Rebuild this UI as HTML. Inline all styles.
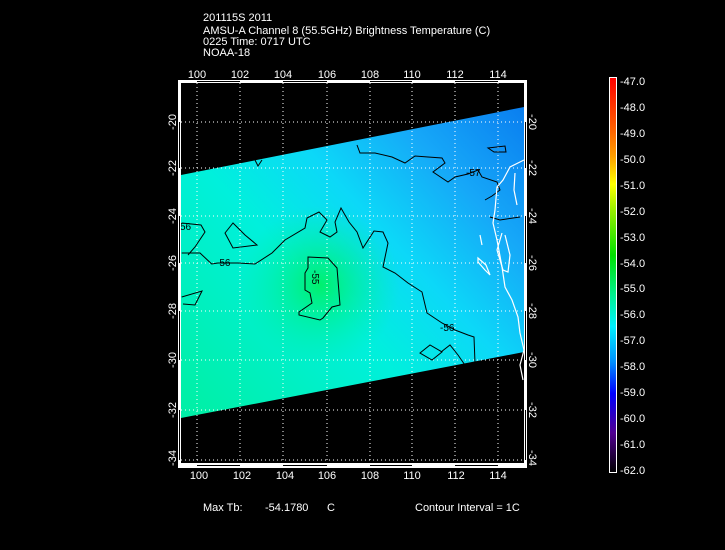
<!DOCTYPE html>
<html><head><meta charset="utf-8"><style>
html,body{margin:0;padding:0;background:#000;}
svg{display:block}
text{font-family:"Liberation Sans",sans-serif;fill:#fff;font-size:11px}
text.k{fill:#000;font-size:10px}
</style></head><body>
<svg width="725" height="550" viewBox="0 0 725 550" xmlns="http://www.w3.org/2000/svg">
<defs>
<linearGradient id="sw" x1="524" y1="110" x2="200" y2="410" gradientUnits="userSpaceOnUse">
<stop offset="0" stop-color="#0a7ff0"/>
<stop offset="0.22" stop-color="#16a8f8"/>
<stop offset="0.42" stop-color="#0cd8f8"/>
<stop offset="0.62" stop-color="#00f0dc"/>
<stop offset="1" stop-color="#00f0a8"/>
</linearGradient>
<radialGradient id="hot" cx="320" cy="285" r="80" gradientUnits="userSpaceOnUse">
<stop offset="0" stop-color="#00f060" stop-opacity="0.9"/>
<stop offset="1" stop-color="#00f0a0" stop-opacity="0"/>
</radialGradient>
<linearGradient id="cb" x1="0" y1="0" x2="0" y2="1">
<stop offset="0" stop-color="#ff0000"/>
<stop offset="0.13" stop-color="#ff6000"/>
<stop offset="0.2" stop-color="#ffa000"/>
<stop offset="0.27" stop-color="#ffff00"/>
<stop offset="0.33" stop-color="#a0f000"/>
<stop offset="0.45" stop-color="#00e000"/>
<stop offset="0.55" stop-color="#00f090"/>
<stop offset="0.63" stop-color="#00f0ff"/>
<stop offset="0.72" stop-color="#0090ff"/>
<stop offset="0.8" stop-color="#0000ff"/>
<stop offset="0.9" stop-color="#500090"/>
<stop offset="1" stop-color="#000000"/>
</linearGradient>
</defs>
<text x="203" y="21">201115S 2011</text>
<text x="203" y="34">AMSU-A Channel 8 (55.5GHz) Brightness Temperature (C)</text>
<text x="203" y="45">0225 Time: 0717 UTC</text>
<text x="203" y="56">NOAA-18</text>
<g text-anchor="middle">
<text x="197" y="78">100</text><text x="240" y="78">102</text><text x="283" y="78">104</text><text x="327" y="78">106</text><text x="370" y="78">108</text><text x="412" y="78">110</text><text x="455" y="78">112</text><text x="498" y="78">114</text>
<text x="199" y="479">100</text><text x="242" y="479">102</text><text x="285" y="479">104</text><text x="327" y="479">106</text><text x="370" y="479">108</text><text x="412" y="479">110</text><text x="456" y="479">112</text><text x="498" y="479">114</text>
</g>
<polygon points="181,175 524,107 524,352 181,418" fill="url(#sw)"/>
<polygon points="181,175 524,107 524,352 181,418" fill="url(#hot)"/>
<g stroke="#fff" stroke-width="1" stroke-dasharray="1,3" fill="none">
<path d="M197 83V463M240 83V463M283 83V463M327 83V463M370 83V463M412 83V463M455 83V463M498 83V463"/>
<path d="M181 122H524M181 168H524M181 216H524M181 263H524M181 311H524M181 360H524M181 410H524M181 460H524"/>
</g>
<g stroke="#000" stroke-width="1" fill="none">
<path d="M181.7 253 L200 253 L211.7 264 L218 263 L238 263 L255 264 L272 253 L285 240 L305 228 L307 218 L319 212 L327 220 L320 232 L330 237 L337 232 L335 222 L341 208 L349 222 L357 232 L363 248 L374 231 L383 232 L388 243 L383 267 L395 273 L408 283 L422 292 L427 313 L442 323 L455 330 L468 335 L474 337 L475 363"/>
<path d="M308 257 L328 258 L337 268 L340 305 L332 307 L323 318 L320 320 L299 315 L299 312 L312 303 L310 293 L305 290 L305 273 L308 268 Z"/>
<path d="M357 145 L360 153 L375 153 L392 157 L405 163 L415 156 L428 157 L442 158 L445 163 L433 172 L448 182 L455 177 L468 174 L478 170 L482 177 L497 182 L500 190 L492 196 L485 200"/>
<path d="M488 148 L505 146 L506 152 L494 152 Z"/>
<path d="M255 160 L258 166 L262 160"/>
<path d="M181.7 223 L201 225 L205 232 L195 247 L188 255"/>
<path d="M225 233 L233 223 L245 235 L257 245 L233 248 Z"/>
<path d="M181.7 297 L202 291 L195 305 L183 304"/>
<path d="M420 353 L430 345 L442 352 L432 360 Z"/>
<path d="M441 352 L450 345 L458 355 L467 368 L472 363"/>
<path d="M490 217 L500 220 L520 217"/>
</g>
<text class="k" x="180" y="230">56</text>
<text class="k" x="216" y="266">-56</text>
<text class="k" x="466" y="176">-57</text>
<text class="k" x="440" y="331">-56</text>
<text class="k" x="300" y="268" transform="rotate(90 305 275)">-55</text>
<g stroke="#fff" stroke-width="1.2" fill="none">
<path d="M524 160 L510 167 L503 180 L497 187 L495 210 L493 223 L497 240 L502 267 L505 287 L512 300 L518 317 L520 333 L524 350 L520 365 L523 380"/>
<path d="M502 233 L497 250 L503 270 L508 272 L510 255 L505 235"/>
<path d="M478 258 L486 265 L490 275 L485 270 L478 262 Z"/>
<path d="M515 173 L514 190 L517 205"/>
<path d="M480 235 L482 245"/>
</g>
<g fill="#fff">
<rect x="178" y="80" width="349" height="3"/>
<rect x="178" y="463" width="349" height="5"/>
<rect x="178" y="80" width="3" height="388"/>
<rect x="524" y="80" width="3" height="388"/>
</g>
<g fill="#000">
<rect x="197" y="81" width="43" height="1"/><rect x="283" y="81" width="44" height="1"/><rect x="370" y="81" width="42" height="1"/><rect x="455" y="81" width="43" height="1"/>
<rect x="197" y="465" width="43" height="1"/><rect x="283" y="465" width="44" height="1"/><rect x="370" y="465" width="42" height="1"/><rect x="455" y="465" width="43" height="1"/>
<rect x="179" y="122" width="1" height="46"/><rect x="179" y="216" width="1" height="47"/><rect x="179" y="311" width="1" height="49"/><rect x="179" y="410" width="1" height="50"/>
<rect x="525" y="122" width="1" height="46"/><rect x="525" y="216" width="1" height="47"/><rect x="525" y="311" width="1" height="49"/><rect x="525" y="410" width="1" height="50"/>
</g>
<g text-anchor="middle">
<text transform="translate(176 122) rotate(-90)">-20</text>
<text transform="translate(176 168) rotate(-90)">-22</text>
<text transform="translate(176 216) rotate(-90)">-24</text>
<text transform="translate(176 263) rotate(-90)">-26</text>
<text transform="translate(176 311) rotate(-90)">-28</text>
<text transform="translate(176 360) rotate(-90)">-30</text>
<text transform="translate(176 410) rotate(-90)">-32</text>
<text transform="translate(176 458) rotate(-90)">-34</text>
<text transform="translate(529 122) rotate(90)">-20</text>
<text transform="translate(529 168) rotate(90)">-22</text>
<text transform="translate(529 216) rotate(90)">-24</text>
<text transform="translate(529 263) rotate(90)">-26</text>
<text transform="translate(529 311) rotate(90)">-28</text>
<text transform="translate(529 360) rotate(90)">-30</text>
<text transform="translate(529 410) rotate(90)">-32</text>
<text transform="translate(529 458) rotate(90)">-34</text>
</g>
<rect x="609.5" y="77.5" width="7" height="395" fill="url(#cb)" stroke="#fff" stroke-width="1"/>
<g font-size="11">
<text x="620" y="85">-47.0</text><text x="620" y="111">-48.0</text><text x="620" y="137">-49.0</text><text x="620" y="163">-50.0</text><text x="620" y="189">-51.0</text><text x="620" y="215">-52.0</text><text x="620" y="241">-53.0</text><text x="620" y="267">-54.0</text><text x="620" y="292">-55.0</text><text x="620" y="318">-56.0</text><text x="620" y="344">-57.0</text><text x="620" y="370">-58.0</text><text x="620" y="396">-59.0</text><text x="620" y="422">-60.0</text><text x="620" y="448">-61.0</text><text x="620" y="474">-62.0</text>
</g>
<text x="203" y="511">Max Tb:</text>
<text x="265" y="511">-54.1780</text>
<text x="327" y="511">C</text>
<text x="415" y="511">Contour Interval = 1C</text>
</svg>
</body></html>
